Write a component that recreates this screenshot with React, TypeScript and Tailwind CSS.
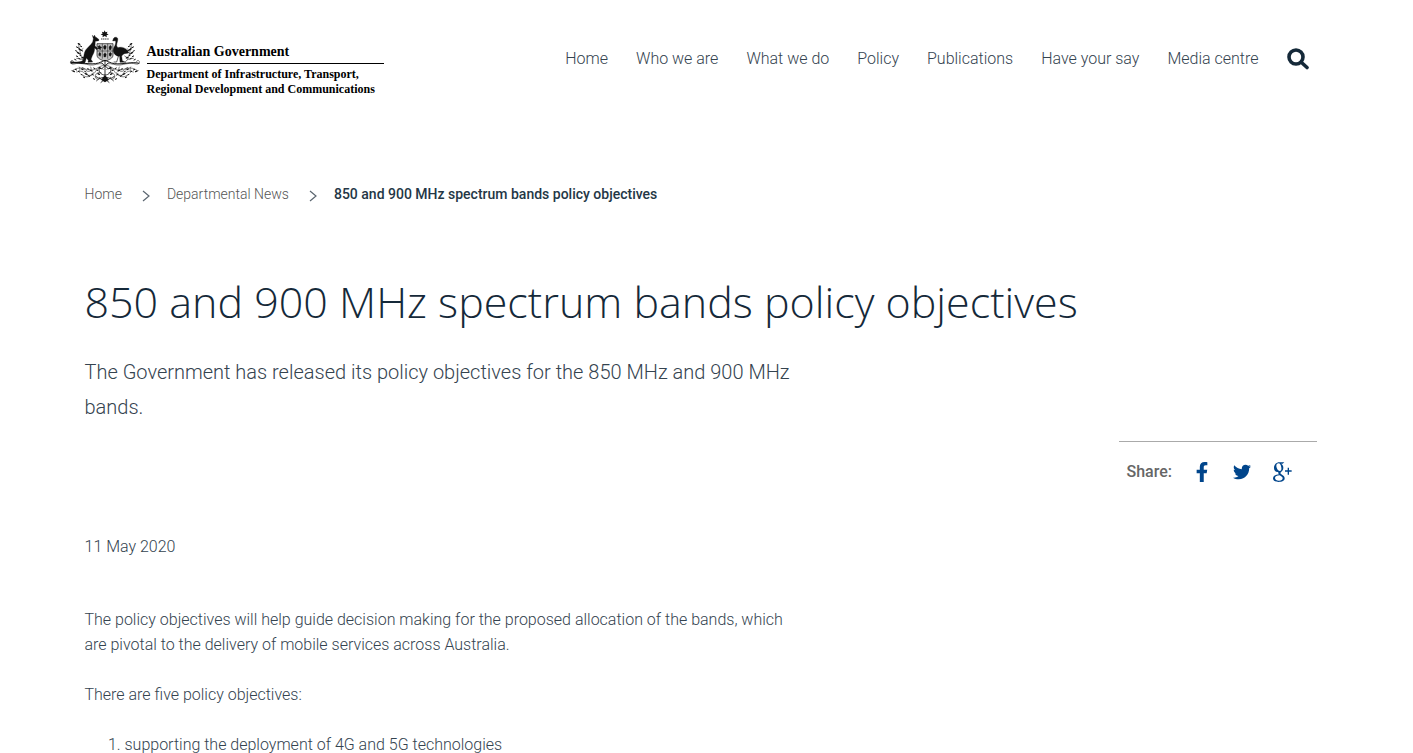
import React from 'react';
import { FaFacebookF, FaTwitter } from 'react-icons/fa';

const navItems = ['Home', 'Who we are', 'What we do', 'Policy', 'Publications', 'Have your say', 'Media centre'];

// wattle blossoms on the right half of the crest, mirrored for the left
const blossoms = [
    [213, 70], [207, 77], [218, 80], [211, 86], [221, 91], [204, 90], [215, 97], [209, 104],
    [219, 107], [201, 111], [212, 114], [224, 117], [150, 142], [158, 149], [167, 143],
    [176, 150], [185, 145], [194, 153], [203, 146], [213, 153], [222, 147], [229, 152],
    [172, 162], [183, 166], [191, 160], [160, 169], [168, 175], [154, 160], [205, 162], [198, 170],
];

function Sprig() {
    return (
        <g>
            <path d="M196 124C207 116 207 102 210 92S214 78 213 71M203 112l-9-6M208 100l11-5M209 90l-8-6M211 84l9-5M204 116l16-3" />
            <path d="M142 129c14-2 24 6 38 4s30-8 48-3c7 2 12-3 10-8-3-5-10-2-8 2M138 134c18 2 24 16 42 14s24-9 38-5 14 10 17 7" />
            <path d="M140 146c10-8 20 0 24 7s12 14 24 10 10-12 22-12M146 157c9-5 20 3 18 12s-11 7-12 1M178 139c-5 8 2 15 9 13s8-9 16-12M170 156c8 14 22 16 31 8M212 139c-5 7 0 14 8 15" />
            {blossoms.map(([x, y], i) => (
                <path key={i} strokeWidth={i % 3 ? 3 : 4} d={`M${x - 2} ${y + 1}l4-2`} />
            ))}
        </g>
    );
}

function CoatOfArms() {
    return (
        <svg viewBox="27 28 216 162" className="h-[54px] w-[72px] shrink-0" fill="#111" stroke="#111" aria-hidden="true">
            <path stroke="none" d="M134 29l2.500 6 6-2-2.500 5.500 6 3-6.500 2 1 6.500-6.500-4-6.500 4 1-6.500-6.500-2 6-3-2.500-5.500 6 2z" />
            <path fill="none" strokeWidth="2.500" strokeDasharray="4 1.500" d="M123 55h24" />
            <g fill="none" strokeWidth="1.600" strokeLinecap="round">
                <Sprig />
                <g transform="translate(270 0) scale(-1 1)">
                    <Sprig />
                </g>
            </g>
            {/* shield */}
            <path fill="#c4c4c4" strokeWidth="2" d="M111 69h48v34c0 10-11 14-24 19-13-5-24-9-24-19z" />
            <path fill="none" strokeWidth="1.600" d="M111 91h48M127 69v45M143 69v45" />
            <path strokeWidth="1" d="M119 74l3 5 4 1-4 3-1 5-4-4-4 1 2-5-2-4 4 1zM135 73l4 5-2 8h-5l-2-8zM151 74l4 4-2 9h-5l-1-8zM119 95l4 4-2 8-5-3 1-6zM135 96l4 5-2 8h-5l-1-8zM151 95l4 4-3 8-4-2-1-6z" />
            {/* kangaroo */}
            <path strokeWidth="1" d="M100 54l-3-10 5 5 1-6 4 7c4 1 6 4 10 7 0 3-2 4-5 4l-6 1c-1 5 0 9-1 14l5 4 3 5-3 2-6-5c0 10-3 17-7 23l-4 11 5 8-14 1 1-6-6-7-3 11c-2 6-10 7-19 5l-22-1c-6-1-4-5 1-4 16 2 28 1 33-4 3-9 2-22 8-31 7-9 15-14 21-24z" />
            {/* emu */}
            <path strokeWidth="1" d="M160 54c3-5 10-6 13-1 2 6-3 14-3 22 1 5 5 6 9 5 11-2 22 5 28 16-5 3-13 1-17 5l-5 5 2 14 10 5h-17l-1-18c-9 1-17-6-19-14-2-6 2-13 5-19 2-6 3-11 1-14l-8 1z" />
            <path fill="none" strokeWidth="2" d="M176 104l-6 20h-9" />
            <path fill="none" strokeWidth="3" d="M32 128c25-6 48 4 74 1 14-1 24-10 29-10s15 9 29 10c26 3 49-7 74-1" />
            {/* base */}
            <path fill="none" strokeWidth="2.500" d="M135 122v52M124 126l22 19M146 126l-22 19M118 139c-4 15 6 24 17 24s21-9 17-24M109 181c12-12 24-12 26-5 2-7 14-7 26 5M122 186l13-11 13 11M116 171l10 6M154 171l-10 6" />
            <path stroke="none" d="M129 170l6-6 6 6 5 8-11 7-11-7z" />
        </svg>
    );
}

function GooglePlusIcon() {
    return (
        <svg viewBox="0 0 57 60" className="h-5 w-[19px]" fill="currentColor" fillRule="evenodd" aria-hidden="true">
            <path d="M34 1l-5 4h-5c5 3 7 7 7 12 0 6-3 10-7 13-3 3-2 5 1 7 6 4 10 7 10 12 0 8-8 11-18 11C7 60 0 56 0 49c0-7 7-11 18-12-2-2-3-4-2-7C7 31 3 25 3 18 3 8 10 1 19 1zM17 4c-5 0-7 4-7 9 1 8 5 14 10 14 4 0 6-4 5-10C24 9 21 4 17 4zM20 40c-8 0-14 3-14 8 0 5 5 8 12 8s11-3 11-7-4-6-9-9z" />
            <path d="M44 17h4v8h8v4h-8v9h-4v-9h-8v-4h8z" />
        </svg>
    );
}

function Chevron() {
    return (
        <svg viewBox="0 0 8 12" className="mt-1 h-3 w-2" fill="none" stroke="#5b6670" strokeWidth="1.200" aria-hidden="true">
            <path d="M1 1l6 5-6 5" />
        </svg>
    );
}

export default function App() {
    return (
        <div className="min-h-screen bg-white font-[Roboto,sans-serif] text-base leading-[25px] font-light text-[#34434f]">
            <div className="mx-auto max-w-[1244px]">
                <header className="flex items-start justify-between pt-[30px] pr-5">
                    <a href="#" className="-ml-4 flex gap-[6px] font-['Liberation_Serif',serif] font-bold text-black">
                        <CoatOfArms />
                        <span className="block pt-3">
                            <span className="block w-[237px] border-b border-black pb-px text-sm leading-5">Australian Government</span>
                            <span className="block pt-[3px] text-xs leading-[15px]">
                                Department of Infrastructure, Transport,
                                <br />
                                Regional Development and Communications
                            </span>
                        </span>
                    </a>
                    <nav className="flex items-center gap-7 pt-4">
                        {navItems.map((item) => (
                            <a key={item} href="#">{item}</a>
                        ))}
                        <button type="button" aria-label="Search" className="text-[#152939]">
                            <svg viewBox="0 0 22 22" className="h-[22px] w-[22px]" fill="none" stroke="currentColor" aria-hidden="true">
                                <circle cx="9" cy="9" r="7" strokeWidth="3.600" />
                                <path strokeWidth="3.600" strokeLinecap="round" d="M14.500 14.500l5.500 5" />
                            </svg>
                        </button>
                    </nav>
                </header>

                <nav aria-label="Breadcrumb" className="pt-[87px]">
                    <ol className="flex items-center gap-[17px] text-sm leading-5">
                        <li className="flex items-center gap-5 text-[#555]">
                            <a href="#">Home</a>
                            <Chevron />
                        </li>
                        <li className="flex items-center gap-5 text-[#555]">
                            <a href="#">Departmental News</a>
                            <Chevron />
                        </li>
                        <li className="font-medium text-[#243746]">850 and 900 MHz spectrum bands policy objectives</li>
                    </ol>
                </nav>

                <main>
                    <h1 className="pt-[68px] font-['Open_Sans',sans-serif] text-[43px] leading-[60px] font-light text-[#152939]">
                        850 and 900 MHz spectrum bands policy objectives
                    </h1>
                    <p className="max-w-[730px] pt-[23px] text-xl leading-[35px]">
                        The Government has released its policy objectives for the 850 MHz and 900 MHz bands.
                    </p>

                    <div className="mt-4 mr-3 ml-auto flex w-[198px] items-center border-t border-[#aaa] pt-5 pl-2">
                        <span className="font-medium text-[#666] leading-5">Share:</span>
                        <a href="#" aria-label="Facebook" className="ml-5 flex w-5 justify-center text-[#00458b]">
                            <FaFacebookF size={20} />
                        </a>
                        <a href="#" aria-label="Twitter" className="ml-5 flex w-5 justify-center text-[#00458b]">
                            <FaTwitter size={18} />
                        </a>
                        <a href="#" aria-label="Google Plus" className="ml-5 flex w-5 justify-center text-[#00458b]">
                            <GooglePlusIcon />
                        </a>
                    </div>

                    <article className="max-w-[710px]">
                        <p className="pt-[52px]">11 May 2020</p>
                        <p className="pt-12">
                            The policy objectives will help guide decision making for the proposed allocation of the bands, which are
                            pivotal to the delivery of mobile services across Australia.
                        </p>
                        <p className="pt-[25px]">There are five policy objectives:</p>
                        <ol className="list-decimal pt-[25px] pl-10">
                            <li>supporting the deployment of 4G and 5G technologies</li>
                        </ol>
                    </article>
                </main>
            </div>
        </div>
    );
}
